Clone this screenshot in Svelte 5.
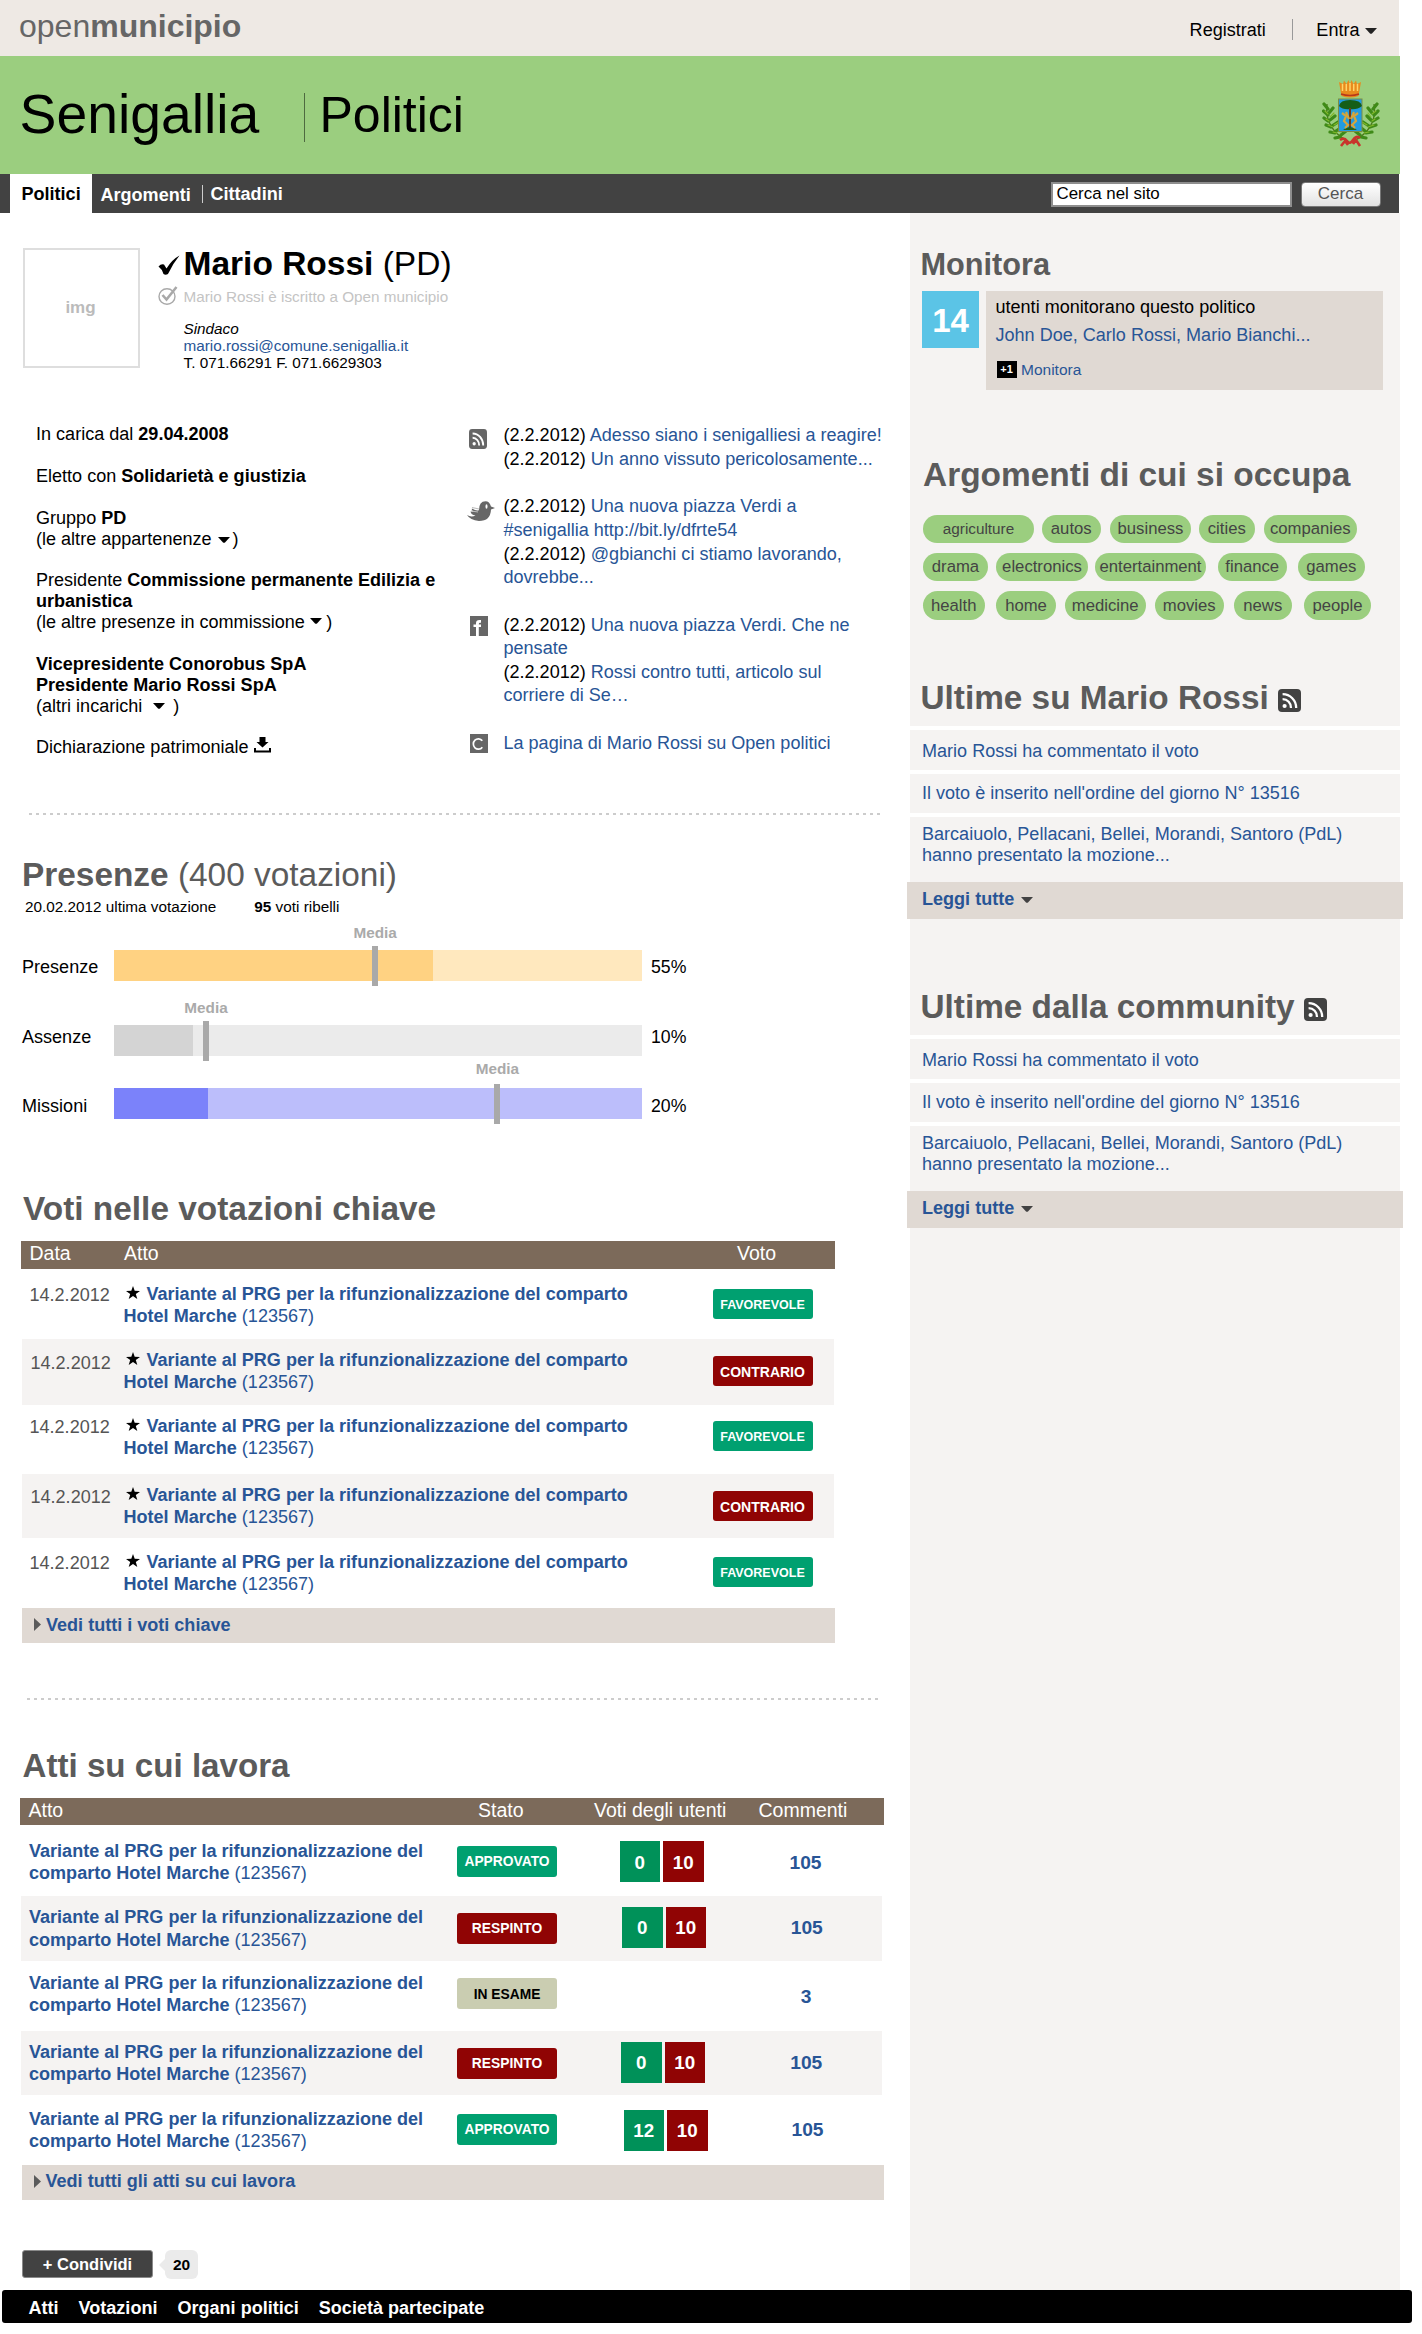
<script>
  const topicRows = [
    [
      { name: 'agriculture', width: 111, gap: 0, small: true },
      { name: 'autos', width: 58.5, gap: 8 },
      { name: 'business', width: 81, gap: 9.5 },
      { name: 'cities', width: 56.5, gap: 7.5 },
      { name: 'companies', width: 93.5, gap: 8.5 },
    ],
    [
      { name: 'drama', width: 65, gap: 0 },
      { name: 'electronics', width: 92, gap: 8 },
      { name: 'entertainment', width: 111, gap: 7 },
      { name: 'finance', width: 69.5, gap: 11.5 },
      { name: 'games', width: 67.5, gap: 10.5 },
    ],
    [
      { name: 'health', width: 62.5, gap: 0 },
      { name: 'home', width: 60, gap: 11 },
      { name: 'medicine', width: 81.5, gap: 8.5 },
      { name: 'movies', width: 69.5, gap: 8.5 },
      { name: 'news', width: 57.5, gap: 10 },
      { name: 'people', width: 67, gap: 12.5 },
    ],
  ];

  const bars = [
    { label: 'Presenze', percent: '55%', fill: 60.45, media: 49.5, kind: 'orange' },
    { label: 'Assenze', percent: '10%', fill: 15.1, media: 17.5, kind: 'gray' },
    { label: 'Missioni', percent: '20%', fill: 17.95, media: 72.65, kind: 'blue' },
  ];

  const votes = ['FAVOREVOLE', 'CONTRARIO', 'FAVOREVOLE', 'CONTRARIO', 'FAVOREVOLE'];

  const acts = [
    { state: 'APPROVATO', kind: 'yes', yes: 0, no: 10, comments: 105 },
    { state: 'RESPINTO', kind: 'no', yes: 0, no: 10, comments: 105 },
    { state: 'IN ESAME', kind: 'wait', yes: null, no: null, comments: 3 },
    { state: 'RESPINTO', kind: 'no', yes: 0, no: 10, comments: 105 },
    { state: 'APPROVATO', kind: 'yes', yes: 12, no: 10, comments: 105 },
  ];

  const feeds = ['Ultime su Mario Rossi', 'Ultime dalla community'];
</script>

{#snippet caret(cls)}
  <svg class="caret {cls}" viewBox="0 0 12 6"><path d="M0 0H12L7 5.4Q6 6.2 5 5.4Z" fill="currentColor" /></svg>
{/snippet}

{#snippet rss(cls)}
  <svg class="rss {cls}" viewBox="0 0 23 23" preserveAspectRatio="none">
    <rect width="23" height="23" rx="4" fill="currentColor" />
    <circle cx="6.6" cy="17" r="2.1" fill="#fff" />
    <path d="M4.6 10.2A8.4 8.4 0 0 1 13 19M4.6 5.2A13.6 13.6 0 0 1 18.2 19" fill="none" stroke="#fff" stroke-width="2.3" />
  </svg>
{/snippet}

<div class="page">
  <header class="topbar">
    <div class="logo">open<b>municipio</b></div>
    <nav class="account">
      <a class="register" href="#registrati">Registrati</a>
      <a class="enter" href="#entra">Entra {@render caret('c-enter')}</a>
    </nav>
  </header>

  <div class="banner">
    <span class="city">Senigallia</span>
    <span class="area">Politici</span>
    <svg class="crest" viewBox="0 0 58 68">
      <g fill="none" stroke="#4d7a1c" stroke-width="1.3">
        <path d="M5 25Q2 50 27 63M52 25Q56 50 30 63" />
      </g>
      <g fill="none" stroke="#3f8a18" stroke-width="3.2" stroke-linecap="round">
        <path d="M6 30L2 25M6 36L1.5 32M6 42L2 39M9 48L4 46M13 54L8 53M18 58L13 59M7 34L11 29M8 41L13 37M10 47L16 43M14 52L20 48M19 56L24 52" />
        <path d="M51 30L55 25M52 36L56 32M51 42L56 39M48 48L54 46M44 54L50 53M39 58L44 59M50 34L46 29M49 41L45 37M47 47L41 43M43 52L38 48M38 56L33 52" />
      </g>
      <g fill="none" stroke="#83b829" stroke-width="1.1" stroke-linecap="round">
        <path d="M6 35L3 32M7 42L4 40M11 48L6 46M15 54L11 53M8 38L12 34M12 46L17 43M18 53L22 50M50 35L54 32M50 42L53 40M46 48L52 46M42 54L47 53M49 38L46 34M45 46L40 43M39 53L36 50" />
      </g>
      <rect x="16.5" y="20" width="23.5" height="32.5" fill="#229be0" stroke="#7d8b45" />
      <path d="M17 27Q18 21 28 21Q39 21 40 27Q35 31 28 30Q21 31 17 27Z" fill="#155e18" />
      <path d="M28 29V50" stroke="#6d3a16" stroke-width="2" />
      <path d="M21 51Q28 45 35 51Z" fill="#26601a" />
      <path d="M20 34L24 37L22 42L26 46L23 49M36 34L32 37L34 42L30 46L33 49M24 33L27 40M32 33L29 40" fill="none" stroke="#d4a63c" stroke-width="2.2" />
      <path d="M19.5 17L17 3L21 5L22 1.500L24.500 5L26.500 1L28 5L29.500 1L31.500 5L34 1.500L35 5L39 3L36.500 17Q28 20 19.500 17Z" fill="#e98a1c" />
      <path d="M20.500 5V12M24.300 5V12M28 4V12M31.700 5V12M35.500 5V12" stroke="#ffd36a" stroke-width="1.5" />
      <path d="M19 15Q28 18 37 15" fill="none" stroke="#b8371a" stroke-width="1.6" />
      <path d="M18 61Q22 58 25 62T31 61T38 59M19 67L23 62L26 66M31 65L34 61L38 67" fill="none" stroke="#c8352c" stroke-width="2.6" />
    </svg>
  </div>

  <div class="navbar">
    <nav class="tabs">
      <a class="active" href="#politici">Politici</a>
      <a class="second" href="#argomenti">Argomenti</a>
      <a class="third" href="#cittadini">Cittadini</a>
    </nav>
    <div class="search">
      <div class="field">Cerca nel sito</div>
      <button>Cerca</button>
    </div>
  </div>

  <div class="columns">
    <main>
      <section class="profile">
        <div class="photo">img</div>
        <div class="marks">
          <svg class="tick" viewBox="0 0 22 20"><path d="M0.500 11.500Q3 8.500 6 9.500L8.500 13.500Q14 4.500 21.500 0.500Q14.500 9 10 19Q7.500 20.500 5.500 19Q4 14 0.500 11.500Z" /></svg>
          <svg class="member" viewBox="0 0 20 19" fill="none" stroke="#a9a9a9"><ellipse cx="9" cy="10.500" rx="8" ry="7.800" stroke-width="1.400" /><path d="M4.500 9L8.500 13.500L18.500 1" stroke-width="2.600" /></svg>
        </div>
        <div class="who">
          <h1>Mario Rossi <span>(PD)</span></h1>
          <p class="member-note">Mario Rossi è iscritto a Open municipio</p>
          <p class="contact"><i>Sindaco</i><br /><a href="#mail">mario.rossi@comune.senigallia.it</a><br />T. 071.66291 F. 071.6629303</p>
        </div>
      </section>

      <section class="details">
        <div class="facts">
          <p>In carica dal <b>29.04.2008</b></p>
          <p>Eletto con <b>Solidarietà e giustizia</b></p>
          <p>Gruppo <b>PD</b><br />(le altre appartenenze {@render caret('c-a')})</p>
          <p>Presidente <b>Commissione permanente Edilizia e<br />urbanistica</b><br />(le altre presenze in commissione {@render caret('c-b')})</p>
          <p><b>Vicepresidente Conorobus SpA<br />Presidente Mario Rossi SpA</b><br />(altri incarichi {@render caret('c-c')})</p>
          <p>
            Dichiarazione patrimoniale
            <svg class="download" viewBox="0 0 17 16"><path d="M5.500 0H11.500V5H14.500L8.500 10.500L2.500 5H5.500ZM0 11H2V13.500H15V11H17V15.500H0Z" /></svg>
          </p>
        </div>
        <ul class="social">
          <li>
            {@render rss('small')}
            <p>(2.2.2012) <a href="#p1">Adesso siano i senigalliesi a reagire!</a><br />(2.2.2012) <a href="#p2">Un anno vissuto pericolosamente...</a></p>
          </li>
          <li>
            <svg class="bird" viewBox="0 0 28 20" fill="#666"><path d="M0 14Q4 16.500 8.500 14.500Q4 14 3.500 10.500L7 11Q4 9 5 7.500Q10 10.500 12 9Q12 0.500 18.500 0.300Q22.500 0.300 24 5.500L28 7L24 8.500Q23.500 20 12 20Q3 19 0 14Z" /><path d="M4 10L11 11M5 6.500L12 8" stroke="#bbb" stroke-width="1.200" /><ellipse cx="19.500" cy="5.500" rx="1" ry="2.300" fill="#fff" /></svg>
            <p>(2.2.2012) <a href="#t1">Una nuova piazza Verdi a<br />#senigallia http://bit.ly/dfrte54</a><br />(2.2.2012) <a href="#t2">@gbianchi ci stiamo lavorando,<br />dovrebbe...</a></p>
          </li>
          <li>
            <svg class="fb" viewBox="0 0 18 20"><rect width="18" height="20" fill="#666" /><path d="M6 20V11H3.500V8.500H6V7Q6 4 9.500 4H11V6.800H10Q8.800 6.800 8.800 8V8.500H11V11H8.800V20Z" fill="#fff" /></svg>
            <p>(2.2.2012) <a href="#f1">Una nuova piazza Verdi. Che ne<br />pensate</a><br />(2.2.2012) <a href="#f2">Rossi contro tutti, articolo sul<br />corriere di Se…</a></p>
          </li>
          <li>
            <svg class="op" viewBox="0 0 18 19"><rect width="18" height="19" fill="#666" /><path d="M12.300 6.800A5 5.200 0 1 0 12.300 13.200" fill="none" stroke="#fff" stroke-width="1.700" /></svg>
            <p><a href="#op">La pagina di Mario Rossi su Open politici</a></p>
          </li>
        </ul>
      </section>

      <div class="dots first"></div>

      <section class="attendance">
        <h2>Presenze <span>(400 votazioni)</span></h2>
        <p class="summary"><span>20.02.2012 ultima votazione</span><span><b>95</b> voti ribelli</span></p>
        <div class="bars">
          {#each bars as bar}
            <div class="bar {bar.kind}">
              <span class="label">{bar.label}</span>
              <div class="track">
                <div class="fill" style:width="{bar.fill}%"></div>
                <div class="media" style:left="{bar.media}%"><b>Media</b><i></i></div>
              </div>
              <span class="percent">{bar.percent}</span>
            </div>
          {/each}
        </div>
      </section>

      <section class="key-votes">
        <h2>Voti nelle votazioni chiave</h2>
        <div class="head"><span>Data</span><span>Atto</span><span>Voto</span></div>
        <div class="rows">
          {#each votes as vote}
            <div class="row">
              <span class="date">14.2.2012</span>
              <a class="title" href="#atto"><svg class="star" viewBox="0 0 14 13"><path d="M7 0L8.700 4.700L14 4.900L9.800 8L11.300 13L7 10.100L2.700 13L4.200 8L0 4.900L5.300 4.700Z" /></svg><b>Variante al PRG per la rifunzionalizzazione del comparto<br />Hotel Marche</b> (123567)</a>
              <span class="badge" class:no={vote === 'CONTRARIO'} class:yes={vote === 'FAVOREVOLE'}>{vote}</span>
            </div>
          {/each}
        </div>
        <a class="more" href="#voti"><svg viewBox="0 0 7 13"><path d="M0 0L7 6.500L0 13Z" /></svg>Vedi tutti i voti chiave</a>
      </section>

      <div class="dots second"></div>

      <section class="acts">
        <h2>Atti su cui lavora</h2>
        <div class="head"><span>Atto</span><span>Stato</span><span>Voti degli utenti</span><span>Commenti</span></div>
        <div class="rows">
          {#each acts as act}
            <div class="row">
              <a class="title" href="#atto"><b>Variante al PRG per la rifunzionalizzazione del<br />comparto Hotel Marche</b> (123567)</a>
              <span class="badge {act.kind}">{act.state}</span>
              <div class="tally">
                {#if act.yes !== null}<b class="up">{act.yes}</b><b class="down">{act.no}</b>{/if}
              </div>
              <a class="comments" href="#commenti">{act.comments}</a>
            </div>
          {/each}
        </div>
        <a class="more" href="#atti"><svg viewBox="0 0 7 13"><path d="M0 0L7 6.500L0 13Z" /></svg>Vedi tutti gli atti su cui lavora</a>
      </section>

      <div class="share">
        <button>+ Condividi</button>
        <span class="count">20</span>
      </div>
    </main>

    <aside>
      <section class="monitor">
        <h2>Monitora</h2>
        <div class="box">
          <div class="number">14</div>
          <div class="text">
            <p>utenti monitorano questo politico</p>
            <p><a href="#utenti">John Doe, Carlo Rossi, Mario Bianchi...</a></p>
            <p class="add"><span>+1</span><a href="#monitora">Monitora</a></p>
          </div>
        </div>
      </section>

      <section class="topics">
        <h2>Argomenti di cui si occupa</h2>
        {#each topicRows as row}
          <div class="tags">
            {#each row as tag}
              <a class:small={tag.small} href="#tag" style:width="{tag.width}px" style:margin-left="{tag.gap}px">{tag.name}</a>
            {/each}
          </div>
        {/each}
      </section>

      {#each feeds as feed}
        <section class="feed">
          <h2>{feed} {@render rss('big')}</h2>
          <ul>
            <li><a href="#n1">Mario Rossi ha commentato il voto</a></li>
            <li><a href="#n2">Il voto è inserito nell'ordine del giorno N° 13516</a></li>
            <li><a href="#n3">Barcaiuolo, Pellacani, Bellei, Morandi, Santoro (PdL)<br />hanno presentato la mozione...</a></li>
          </ul>
          <a class="all" href="#tutte">Leggi tutte {@render caret('c-all')}</a>
        </section>
      {/each}
    </aside>
  </div>

  <footer>
    <a href="#atti">Atti</a><a href="#votazioni">Votazioni</a><a href="#organi">Organi politici</a><a href="#societa">Società partecipate</a>
  </footer>
</div>

<style>
  :global(body) { background: #fff; }
  .page {
    width: 1422px; height: 2334px; overflow: hidden;
    font-family: "Liberation Sans", Arial, Helvetica, sans-serif;
    font-size: 18.060px; line-height: 20px; color: #000;
  }
  .page :global(*) { box-sizing: border-box; }
  h1, h2, p, ul { margin: 0; padding: 0; list-style: none; white-space: nowrap; }
  a { color: #285596; text-decoration: none; white-space: nowrap; }
  button { font-family: inherit; padding: 0; }
  svg { flex: none; }
  h2 { color: #5b5b5b; font-size: 33.400px; line-height: 40px; }
  h2 span { font-weight: normal; }
  .caret { width: 12px; height: 6px; }

  .topbar { width: 1398.500px; height: 56px; background: #eee9e4; display: flex; justify-content: space-between; padding: 0 22px 0 19px; }
  .logo { font-size: 32px; line-height: 53px; color: #666; }
  .account { display: flex; align-items: flex-start; padding-top: 19px; }
  .account a { color: #000; line-height: 22px; }
  .register { padding-right: 26px; height: 21px; border-right: 1px solid #999; }
  .enter { padding-left: 23.500px; }
  .c-enter { color: #222; vertical-align: 2px; }

  .banner { width: 1400px; height: 118px; background: #9bce7f; display: flex; align-items: flex-start; padding-left: 19.500px; }
  .city { width: 284px; font-size: 55.300px; line-height: 77px; padding-top: 19.500px; }
  .area { border-left: 1.500px solid #4e6a40; font-size: 50px; line-height: 49px; height: 49px; margin-top: 37px; padding-left: 15px; padding-bottom: 4px; display: flex; align-items: center; }
  .crest { width: 58px; height: 68px; margin: 23px 20px 0 auto; }

  .navbar { width: 1398.500px; height: 39px; background: #424242; display: flex; justify-content: space-between; }
  .tabs { display: flex; padding-left: 9.500px; align-items: center; font-weight: bold; }
  .tabs a { color: #fff; line-height: 41px; height: 39px; }
  .tabs .active { background: #fff; color: #000; width: 82px; padding-left: 12px; }
  .tabs .second { padding-left: 9px; line-height: 20px; height: 18px; width: 111.500px; border-right: 1px solid #ccc; }
  .tabs .third { padding-left: 7.500px; }
  .search { display: flex; padding: 7.500px 18px 0 0; gap: 9px; font-size: 16.900px; }
  .field { width: 241px; height: 25px; background: #fff; border: 2px solid #8e8e8e; line-height: 20px; padding-left: 4px; }
  .search button { width: 80px; height: 25.500px; border: 1px solid #777; border-radius: 4px; background: linear-gradient(#fff, #e2e2e2); color: #555; font-size: 17px; }

  .columns { display: flex; height: 2077px; }
  main { width: 909.500px; }
  aside { width: 490.500px; background: #f5f3f2; }

  .profile { height: 197px; padding: 30px 0 0 23px; display: flex; }
  .photo { width: 116.500px; height: 120px; margin-top: 5px; border: 2px solid #dedede; color: #bbb; font-weight: bold; font-size: 17px; display: flex; align-items: center; justify-content: center; padding-right: 1.500px; }
  .marks { width: 44px; padding: 12px 0 0 18px; display: flex; flex-direction: column; gap: 11px; }
  .tick { width: 22px; height: 20px; }
  .member { width: 20px; height: 19px; }
  h1 { font-size: 33.500px; line-height: 42px; }
  h1 span { font-weight: normal; }
  .member-note { font-size: 15.280px; color: #c4c4c4; margin-top: 1.500px; }
  .contact { font-size: 15.300px; line-height: 17px; margin-top: 13.500px; }

  .details { height: 402.500px; padding: 14.300px 0 0 36px; display: flex; }
  .facts { width: 432px; line-height: 20.880px; }
  .facts p { margin-bottom: 20.880px; }
  .facts .caret { vertical-align: 2px; }
  .facts .c-a { margin: 0 3px 0 1px; }
  .facts .c-b { margin: 0 4px 0 0.500px; vertical-align: 4px; }
  .facts .c-c { margin: 0 8px 0 6px; vertical-align: 3px; }
  .facts .download { width: 17px; height: 16px; vertical-align: 0; margin: -4px 0 0 0.500px; }
  .social { line-height: 23.650px; }
  .social li { display: grid; grid-template-columns: 35.500px 1fr; align-items: start; margin-bottom: 23.650px; }
  .rss.small { width: 18px; height: 20px; color: #666; margin: 4.500px 0 0 1px; }
  .bird { width: 28px; height: 20px; margin: 5.500px 0 0 -1px; }
  .fb { width: 18px; height: 20px; margin: 2px 0 0 2px; }
  .op { width: 18px; height: 19px; margin: 2.500px 0 0 2px; }

  .dots { height: 2px; width: 851px; background: repeating-linear-gradient(90deg, #ccc 0 3px, transparent 3px 6.950px); }
  .dots.first { margin-left: 29px; }
  .dots.second { margin-left: 27px; }

  .attendance { height: 372.500px; padding: 40.400px 0 0 22px; }
  .summary { font-size: 15.300px; display: flex; gap: 38px; margin: 1.800px 0 33.300px 3px; }
  .bar { display: flex; height: 31px; }
  .bar .label { width: 91.500px; }
  .track { position: relative; width: 528.500px; height: 31px; }
  .fill { height: 100%; }
  .percent { padding-left: 9px; font-size: 17.700px; }
  .orange { margin-bottom: 44px; }
  .gray { margin-bottom: 32px; }
  .orange .label, .orange .percent { padding-top: 7px; }
  .gray .label, .gray .percent { padding-top: 2.500px; }
  .blue .label, .blue .percent { padding-top: 8px; }
  .orange .track { background: #ffe8be; }
  .orange .fill { background: #ffd282; }
  .gray .track { background: #ebebeb; }
  .gray .fill { background: #d4d4d4; }
  .blue .track { background: #bcbefb; }
  .blue .fill { background: #7b82fa; }
  .media { position: absolute; top: -27px; width: 60px; margin-left: -30px; display: flex; flex-direction: column; align-items: center; font-size: 15.300px; color: #aaa; }
  .media i { width: 6px; height: 40px; background: #a9a9a9; margin-top: 3px; }
  .blue .media { top: -28.500px; }
  .blue .media i { margin-top: 5px; }

  .head { background: #7c6a5a; color: #fff; font-size: 19.500px; }
  .rows .row { display: grid; align-items: start; }
  .title { line-height: 22.200px; }
  .badge { display: flex; width: 100px; height: 30px; border-radius: 3px; color: #fff; font-weight: bold; font-size: 14px; align-items: center; justify-content: center; padding-top: 2px; }
  .badge.yes { background: #00a070; }
  .badge.no { background: #900404; }
  .badge.wait { background: #cacdb1; color: #000; }
  .more { display: flex; align-items: center; gap: 5px; font-weight: bold; background: #e0d9d3; height: 35px; padding: 0 0 2px 12px; }
  .more svg { width: 7px; height: 13px; fill: #5b5b5b; }

  .key-votes { height: 511px; padding: 1.500px 0 0 21px; }
  .key-votes h2 { padding-left: 2px; margin-bottom: 12.500px; }
  .key-votes .head { width: 814px; height: 28px; display: grid; grid-template-columns: 94.500px 613px 1fr; padding-left: 8.500px; line-height: 25px; }
  .key-votes .row { width: 811.500px; margin-left: 1px; grid-template-columns: 93.500px 589px 1fr; padding-left: 7.500px; height: 70px; --date: 14.600px; --title: 13.600px; --badge: 20px; }
  .key-votes .row:nth-child(even) { background: #f5f3f2; padding-left: 8.500px; grid-template-columns: 92.500px 589px 1fr; }
  .key-votes .row:nth-child(2) { height: 66px; --date: 12.500px; --title: 10px; --badge: 17px; }
  .key-votes .row:nth-child(3) { height: 69px; --date: 10.900px; --title: 10px; --badge: 16px; }
  .key-votes .row:nth-child(4) { height: 64px; --date: 12px; --title: 10px; --badge: 17px; }
  .key-votes .row:nth-child(5) { --date: 13.600px; --title: 12.900px; --badge: 19px; }
  .date { color: #555; line-height: 22.200px; margin-top: var(--date); }
  .key-votes .title { margin-top: var(--title); padding-left: 0.500px; }
  .star { width: 14px; height: 13px; margin: 0 6.500px 0 2.500px; vertical-align: 1px; }
  .key-votes .badge { margin: var(--badge) 0 0 0.500px; }
  .key-votes .badge.yes { font-size: 12.500px; padding-top: 1px; }
  .key-votes .more { width: 812.500px; margin-left: 1px; }

  .acts { height: 500px; padding: 46px 0 0 19.500px; }
  .acts h2 { font-size: 33.150px; padding-left: 3px; margin-bottom: 11.500px; }
  .acts .head { width: 864.500px; height: 27.500px; display: grid; grid-template-columns: 449.500px 116px 164.500px 1fr; padding-left: 9px; line-height: 25px; }
  .acts .row { width: 861px; margin-left: 1.500px; padding-left: 8px; grid-template-columns: 428px 162.500px 156px 60px; height: 71px; --title: 14.500px; --badge: 20.500px; --tally: 16px; --comm: 26.500px; --shift: 0px; }
  .acts .row:nth-child(even) { background: #f5f3f2; }
  .acts .row:nth-child(2) { height: 65px; --title: 10.300px; --badge: 16.500px; --tally: 10.500px; --comm: 20.700px; --shift: 2.500px; }
  .acts .row:nth-child(3) { height: 70px; --title: 10.700px; --badge: 17px; --comm: 25.400px; --shift: 1px; }
  .acts .row:nth-child(4) { height: 63.500px; --title: 9.800px; --badge: 16.500px; --tally: 10.700px; --comm: 20.700px; --shift: 1.500px; }
  .acts .row:nth-child(5) { height: 70px; --title: 13px; --badge: 19px; --tally: 15px; --comm: 24.700px; --shift: 4px; }
  .acts .title { margin-top: var(--title); }
  .acts .badge { margin-top: var(--badge); height: 31px; font-size: 13.800px; }
  .tally { display: flex; gap: 3px; margin: var(--tally) 0 0 var(--shift); }
  .tally b { width: 40.500px; height: 41px; color: #fff; font-size: 18.800px; display: flex; align-items: center; justify-content: center; padding-top: 2px; }
  .up { background: #009159; }
  .down { background: #900404; }
  .comments { font-weight: bold; font-size: 19.200px; line-height: 22px; text-align: center; margin: var(--comm) 0 0 var(--shift); }
  .acts .more { width: 862.500px; margin-left: 2px; }

  .share { display: flex; padding: 50px 0 0 22px; }
  .share button { width: 131px; height: 28px; background: #424242; border: 1px solid #8a8a8a; border-radius: 3px; color: #fff; font-weight: bold; font-size: 16.500px; padding-top: 1px; }
  .count { position: relative; width: 33px; height: 29px; margin-left: 12px; background: #ebebeb; border-radius: 6px; font-size: 15.500px; font-weight: bold; display: flex; align-items: center; justify-content: center; }
  .count::before { content: ""; position: absolute; left: -6px; top: 9px; border: 6px solid transparent; border-right-color: #ebebeb; border-left: 0; }

  .monitor { height: 239.500px; padding: 32px 0 0 11px; }
  .monitor h2 { font-size: 30.700px; margin-bottom: 6px; }
  .box { display: flex; align-items: flex-start; gap: 7px; padding-left: 1.500px; }
  .number { width: 57px; height: 57px; background: #5bc4e6; color: #fff; font-weight: bold; font-size: 33px; line-height: 60px; text-align: center; }
  .text { width: 397px; height: 98.500px; background: #e0d9d3; padding: 5.500px 0 0 9.500px; }
  .text p + p { margin-top: 8.500px; }
  .text p.add { display: flex; align-items: center; gap: 4.500px; font-size: 15.500px; margin: 14.500px 0 0 1px; }
  .add span { width: 20px; height: 17px; background: #000; color: #fff; font-weight: bold; font-size: 11px; line-height: 17px; text-align: center; }

  .topics { height: 223.500px; padding: 2.500px 0 0 13.500px; }
  .topics h2 { font-size: 33.450px; margin-bottom: 19.500px; }
  .tags { display: flex; height: 28.500px; margin-bottom: 9.700px; }
  .tags:last-child { margin: 10px 0 0 -0.500px; }
  .tags a { background: #9bce7f; border-radius: 15px; color: #444; font-size: 16.700px; display: flex; align-items: center; justify-content: center; padding-top: 1px; }
  .tags a.small { font-size: 15.300px; }

  .feed { height: 309px; }
  .feed h2 { font-size: 33.350px; padding: 1.500px 0 0 11px; height: 50px; }
  .rss.big { width: 23px; height: 23px; color: #424242; vertical-align: -3px; }
  .feed li { border-top: 4px solid #fff; padding-left: 12.500px; line-height: 20.500px; height: 43px; padding-top: 9px; }
  .feed li:first-child { height: 44px; padding-top: 10.500px; }
  .feed li:last-child { height: 69px; padding-top: 7.300px; }
  .all { display: block; width: 496px; height: 37px; margin-left: -2.500px; padding: 6.500px 0 0 15px; background: #e0d9d3; font-weight: bold; }
  .c-all { color: #424242; margin-left: 2px; vertical-align: 2px; }

  footer { width: 1410px; height: 33px; margin-left: 2px; background: #000; border-radius: 3px; padding-left: 26.500px; display: flex; gap: 20px; font-weight: bold; line-height: 36px; }
  footer a { color: #fff; }
</style>
